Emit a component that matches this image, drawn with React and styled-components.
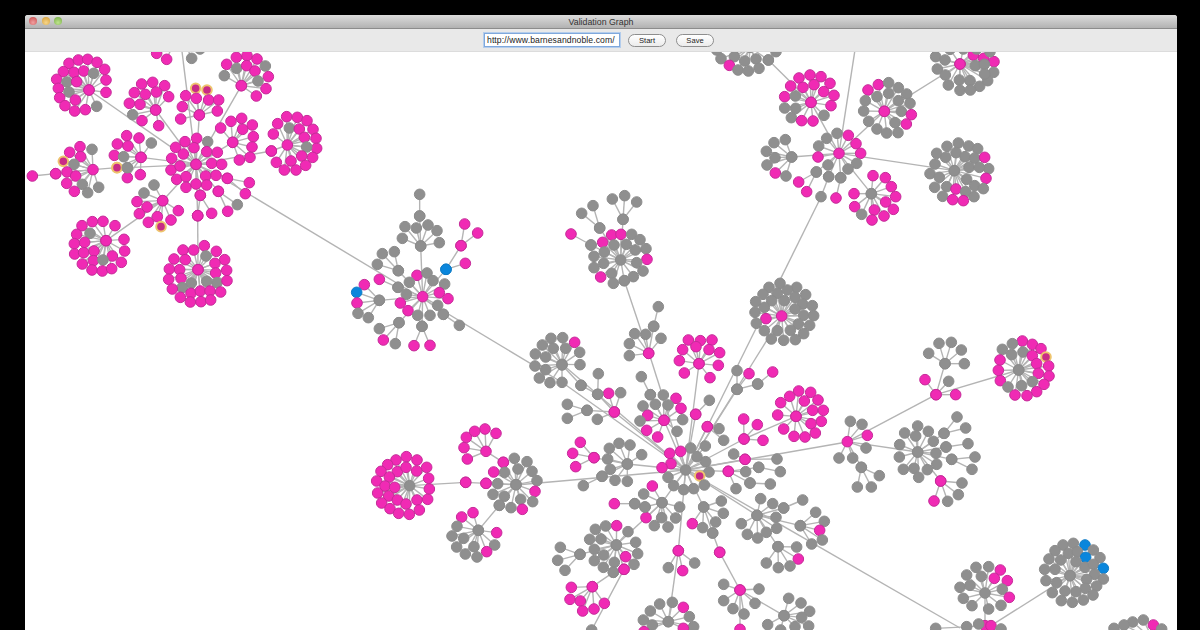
import React from 'react';
import styled, { createGlobalStyle } from 'styled-components';

// every cluster is "hub leaf leaf ..." in the coordinates of its crop, p/g/b/y = pink, gray, blue, gold
const crops = [
  { ox: 20, oy: 50, clusters: [
    '528,343p 495,275p 530,265p 563,275g 467,292p 522,293p 490,312p 560,305p 592,307p 455,325p 575,340p 605,343p 453,360p 480,348p 557,378p 588,376p 470,388p 498,380p 498,412p 528,402p 560,405p 622,385p 595,424p 541,436p 478,-60g 207,120p 407,180p 538,195p 664,107p 638,277p 754,303p 363,322p 428,452p 533,497p',
    '207,120p 147,40p 175,30p 203,28p 231,37p 254,58p 258,90p 258,127p 130,65p 162,67p 191,63p 221,70g 110,88p 141,96g 170,95p 115,115p 147,126g 119,143p 166,150p 135,167p 164,183p 196,179p 230,169g',
    '407,180p 365,102p 398,97p 434,107p 343,128p 376,133p 409,126p 446,140p 328,160p 360,163p 338,194g 366,212p 416,227p',
    '538,195p 527,115y 561,120y 497,137p 529,145p 566,150p 596,150p 487,170p 592,183p 482,207p',
    '664,107p 649,22p 681,17p 711,27p 620,43p 650,55g 680,47p 705,63p 736,48g 613,77g 745,80p 714,93g 738,116p 709,138p',
    '638,277p 602,234p 633,214p 665,205p 668,238p 697,225p 700,260p 696,291p 690,322p 658,330p',
    '802,285p 800,200p 832,202p 861,212p 760,252p 773,221p 808,234g 838,237p 879,238p 853,262p 888,265p 890,295p 860,291g 754,303p 845,318p 878,322p 769,337p 813,333p 857,346p 793,360p 828,360p',
    '363,322p 320,257p 357,264p 394,279g 292,282p 324,288p 283,316p 311,320g 322,353g 291,353y 322,383p 361,374p',
    '219,359p 180,290p 216,298g 149,307p 182,320p 130,334y 162,343g 107,371p 141,366p 167,378p 140,400p 187,403g 236,412g 163,424p 203,428g 291,353y',
    '107,371p 37,378p',
    '322,353g 528,343p',
    '428,452p 402,405g 372,429g 351,455p 381,471p 358,491p 475,482p 412,500p 385,517p 453,510p 423,530y 258,572p',
    '258,572p 186,527p 217,515p 249,514p 285,527p 170,553p 210,550g 312,568p 163,581p 194,577p 164,612p 191,608p 222,603p 314,603p 277,618p 304,637p 187,642p 220,632p 249,630g 216,660p 247,663p 275,656p',
    '533,497p 534,659p',
    '534,659p 489,600p 521,600p 553,587p 589,604p 558,618g 462,627p 496,629p 614,629p 585,640p 448,657p 479,659p 620,661p 587,669p 446,688p 483,685p 514,699g 560,694g 591,698g 621,692p 487,713g 457,717p 602,726p 513,730p 541,723p 570,723p 481,742p 511,756p 543,755p 572,750p',
    '541,436p 575,490p 533,497p',
    '595,424p 623,484p 652,464g',
    '622,385p 676,431p 688,398p',
    '478,-60g 410,10p 440,28p 515,25g 540,-3g',
  ] },
  { ox: 340, oy: 180, clusters: [
    '248,350p 231,286p 261,279g 208,307g 279,302g 314,312g 174,322g 199,343g 298,338p 324,356p 181,369p 204,392p 293,376g 233,406g 270,406g 310,403g 118,361g 175,272g 242,198g 318,268b 177,428g 246,439g',
    '310,403g 358,436g',
    '118,361g 73,314p 50,337b 51,369p 54,400g 85,413g',
    '175,272g 127,221g 163,215g 112,253g',
    '174,322g 118,298p',
    '242,198g 195,140g 229,144g 264,135g 291,152g 187,175g 298,188g 239,108g',
    '239,108g 239,43g',
    '318,268b 363,197p 376,250p',
    '363,197p 374,132p 413,159p',
    '177,428g 118,446g 130,480p 166,491g',
    '246,439g 222,497p 270,496p',
    '842,240g 815,165p 843,163p 788,187p 875,163g 900,179g 918,206g 753,195g 822,195g 859,193g 886,210g 793,216g 762,229g 921,238p 791,250g 890,248g 762,263g 909,273g 815,280g 782,291p 880,290g 853,302g 820,310g 779,144g 849,118g',
    '753,195g 693,162p',
    '779,144g 725,100g 759,77g',
    '849,118g 817,57g 854,47g 890,66g',
    '853,302g 926,520p',
    '926,520p 941,439g 884,461g 917,463g 868,491g 868,527g 963,475g',
    '941,439g 955,380g',
    '666,553g 633,475g 668,473g 607,495g 640,505g 677,505g 704,487p 586,522g 617,531g 719,517g 585,558g 617,569g 720,554g 598,594g 630,608g 666,607g',
  ] },
  { ox: 700, oy: 50, clusters: [
    '417,310p 411,250g 445,256p 380,265g 468,281p 356,288g 482,310p 354,321p 470,340g 384,345g 444,357g 349,366g 386,380g 422,383g 468,-20g 333,157p 553,184p 275,321g 514,431g 763,362g',
    '349,366g 296,396p 320,425p',
    '386,380g 363,440g',
    '422,383g 408,444p',
    '333,157p 297,84p 330,75p 363,80p 272,108p 342,104p 390,100p 309,112p 371,125p 402,136p 254,140p 286,138g 393,167p 254,174g 287,175g 372,196g 274,203g 305,212p 339,213p 205,30g',
    '150,-8g 205,30g 168,27g 134,33g 63,26g 103,20g 88,46p 114,60g 145,63g 177,55g 50,0g 228,5g',
    '553,184p 504,120p 535,104p 566,98g 595,113g 620,132g 531,140g 566,130g 595,152g 496,152g 630,160g 491,183g 604,184g 634,194p 506,214g 585,218g 619,222p 531,237g 560,249g 594,248g 780,42p',
    '780,42p 820,15p 851,25p 882,35p 707,20g 735,30g 712,57g 736,75g 826,47g 853,43g 881,67g 745,105g 778,90g 810,92g 839,109g 780,121g 811,120g 863,92g 854,72g 750,-2g 790,-3g 830,-3g 870,5g',
    '275,321g 222,278g 256,269g 199,304g 225,323g 201,345g 226,369p 258,378g',
    '514,431g 519,377p 556,383p 574,410p 587,440p 462,431p 557,456p 580,478p 464,470p 523,480p 552,498p 485,493g 516,510p',
    '763,362g 741,289g 775,279g 806,288g 833,296g 710,310g 737,322g 768,308g 795,320g 824,325g 854,322p 705,342g 866,356g 690,371g 718,382g 807,352g 838,352g 800,388g 858,385p 704,412g 740,410g 768,417p 824,407g 850,416g 797,425g 728,439g 758,449p 790,452p 822,440g',
    '245,798p 240,700g 207,712g 290,712g 189,733g 232,730g 262,720g 317,734g 167,755g 215,752g 253,752g 285,742g 308,762g 337,767g 193,772g 285,777g 165,787g 311,796g 341,797g 198,806p 169,820g 295,822g 329,826g 193,842g 232,842g 271,841g 311,851g 214,867g 251,871g 286,869g',
  ] },
  { ox: 530, oy: 340, clusters: [
    '467,390g 482,324g 452,334p 419,340p 526,318g 501,350g 527,365g 423,371p 396,383p 537,396g 509,408y 414,412g 431,437g 461,449g 491,446g 523,435g 497,223p 532,260p 621,148g 642,297p 645,358p 595,394p 507,71p 402,241p 253,216p 292,372g 396,488g 445,632p 521,501g 681,526g',
    '497,223p 538,181g',
    '532,260p 567,266g 581,301g',
    '621,148g 621,92g 683,132g',
    '683,132g 728,96p',
    '621,148g 657,101p',
    '642,297p 641,237p 682,254p 699,301p 798,229p',
    '645,358p 741,357g 611,342g',
    '595,394p 686,382g 647,395g 660,429g 618,446g',
    '686,382g 751,395g',
    '660,429g 721,432g',
    '798,229p 806,153p 842,157p 779,169p 864,180p 752,188p 823,183p 848,211p 880,211p 743,225p 874,244p 843,251p 856,279p 761,267p 792,289p 825,291p',
    '507,71p 475,0p 511,2p 546,0p 458,29p 498,20p 537,29p 569,38p 448,62p 565,76p 463,99p 540,113p',
    '402,241p 361,164g 400,165g 438,175p 339,198g 376,193g 414,195g 453,205p 353,226p 458,239g 330,243g 350,271p 441,274g 383,291p',
    '361,164g 334,110g',
    '253,216p 236,160p 203,163g 272,158g 171,211g 202,238g',
    '203,163g 205,101g 153,136g',
    '153,136g 96,75g',
    '171,211g 112,193g 112,235g',
    '292,372g 267,310g 300,315g 238,325g 335,344g 233,357g 241,388g 216,409g 255,421g 292,424g 192,353p',
    '216,409g 160,437g',
    '192,353p 151,307p 128,340p 137,380p',
    '396,488g 341,462g 367,438p 345,501g 449,501g 348,533p 395,533g 437,534g 373,557g 414,561g 259,615g',
    '345,501g 314,491g',
    '314,491g 253,491p',
    '259,615g 196,568g 227,558g 260,557p 294,575g 179,598g 213,597g 317,607g 193,628g 323,641g 221,645g 287,650p 193,662g 253,667g 312,673g 220,682g 282,688p 250,697g 150,643g',
    '150,643g 91,622g 83,661g 105,691g',
    '250,697g 187,740p',
    '187,740p 124,742p 120,778p 151,783p 158,813p 192,807p 223,790p',
    '282,688p 185,870g',
    '445,632p 415,683g 458,692p 494,669g 415,845g',
    '415,845g 427,787g 389,792g 460,802p 361,813g 478,830g 340,840g 367,855g 491,860g 460,865p 342,875p',
    '521,501g 574,483g 580,520g 487,551p 557,546g 518,563g 548,579g',
    '548,579g 569,637p',
    '569,637p 630,750p',
    '630,750p 581,733g 687,747g 581,782g 609,806g 675,790g 642,822g 762,827g 630,868p',
    '762,827g 776,775g 813,789g 839,814g 815,832g 713,854g 836,858g 795,860g 752,870g',
    '681,526g 692,476g 728,491g 761,504g 634,551g 738,532g 740,565g 652,583g 683,594g 709,577g 811,557g 744,620g',
    '761,504g 818,480g',
    '811,557g 857,517g 883,544g 869,571p 845,612g 877,600g',
    '744,620g 800,621g 805,657p 709,669g 745,683g 780,678g',
  ] },
  { ox: 360, oy: 410, clusters: [
    '149,227g 139,140p 108,150p 171,150p 83,164p 200,172p 63,184p 112,185p 138,172p 170,183p 88,201p 206,205p 50,213p 75,228p 104,232p 208,237p 53,249p 86,258p 203,268p 65,279p 112,270p 138,282p 171,270p 178,300p 90,296p 116,310p 148,313p 317,217p',
    '317,217p 378,220p',
    '378,220p 468,224g',
    '378,124p 375,57p 344,64p 408,70p 319,82p 312,113p 322,147p 430,157p',
    '468,224g 463,145g 501,155g 430,157p 474,177g 434,187g 516,184g 401,186p 531,212g 413,221g 525,244p 399,253g 433,259g 518,275g 482,268g 418,286g 453,293g 487,298p',
    '418,286g 355,361g',
    '355,361g 305,321p 339,308p 291,349g 276,378g 311,385g 410,368p 404,405g 290,411g 342,410g 380,425p 316,432g 351,441g',
  ] },
  { ox: 840, oy: 330, clusters: [
    '22,335p 31,274g 66,283g 82,316p 78,354g 38,384g -3,384g 64,412g 288,194p 233,366g',
    '64,412g 118,437g 52,471g 94,471g',
    '288,194p 255,149p 326,154g 347,194p 315,101g 536,120g',
    '315,101g 297,40g 334,37g 266,70g 364,60g 373,101g',
    '536,120g 547,33p 517,41g 577,43p 487,58g 603,56p 515,74g 549,66g 577,77p 618,81y 480,90p 590,101p 626,108p 475,121p 595,130p 627,138p 481,152p 577,155g 612,163p 504,171g 545,167g 590,185p 525,195p 561,197p',
    '233,366g 233,288g 194,309g 265,304g 227,318g 280,334g 179,344g 318,351g 288,370g 178,381g 335,388g 290,403g 222,415g 190,418g 262,419g 236,442g 312,310g 302,453p',
    '318,351g 384,341g',
    '335,388g 405,381g 396,418g',
    '312,310g 351,261g 377,294g',
    '302,453p 366,459g 355,494g 323,514g 282,513p',
    '435,789g 408,712g 446,710g 481,720p 380,735g 424,739g 463,745p 502,752p 360,772g 390,766g 487,778g 370,805g 508,802p 396,827g 446,837g 483,826g 435,887p',
    '453,887p 380,890g 416,882g 287,895g 483,897g 690,737g',
    '690,737g 700,640g 669,645g 735,645b 645,662g 685,670g 712,665g 760,660g 627,687g 662,690g 737,682b 708,695g 780,683g 614,718g 645,718g 735,712g 760,703g 790,715b 764,733g 740,748g 790,747g 618,752g 650,758g 736,775g 770,768g 637,788g 675,783g 708,785g 759,795g 664,812g 697,817g 730,810g',
    '940,930g 940,885p 910,870g 878,876g 852,885g 822,895g 965,897g',
  ] },
];

// long edges that run from one crop to the next, in page coordinates
const bridges = [
  [227, 181, 563, 383],
  [563, 383, 686, 470],
  [562, 364, 686, 470],
  [649, 353, 686, 470],
  [821, 197, 686, 470],
  [782, 316, 686, 470],
  [516, 485, 686, 470],
  [847, 442, 686, 470],
  [703, 480, 960, 628],
];

const parseNode = (token, ox, oy) => {
  const [, x, y, kind] = token.match(/(-?\d+),(-?\d+)([pgby])/);
  return { x: ox + x / 3, y: oy + y / 3, kind };
};

const edges = bridges.map(([x1, y1, x2, y2]) => ({ x1, y1, x2, y2 }));
const nodes = [];

crops.forEach(({ ox, oy, clusters }) => {
  clusters.forEach((cluster) => {
    const [hub, ...leaves] = cluster.split(' ').map((t) => parseNode(t, ox, oy));
    nodes.push(hub, ...leaves);
    leaves.forEach((leaf) => edges.push({ x1: hub.x, y1: hub.y, x2: leaf.x, y2: leaf.y }));
  });
});

const nodeFill = { p: '#f02ab4', g: '#8f8f8f', b: '#0a86dc', y: '#c92a86' };
const nodeStroke = { p: '#c42c98', g: '#8c8c8c', b: '#0f7cc6', y: '#eec46e' };

const GlobalStyle = createGlobalStyle`
  html, body {
    margin: 0;
    background: #000;
  }
`;

const Page = styled.div`
  box-sizing: border-box;
  width: 1200px;
  height: 630px;
  padding: 15px 23px 0 25px;
  overflow: hidden;
  font-family: "Liberation Sans", Arial, sans-serif;
`;

const Window = styled.div`
  display: flex;
  flex-direction: column;
  height: 100%;
  background: #fff;
  border-radius: 3px 3px 0 0;
`;

const TitleBar = styled.div`
  position: relative;
  box-sizing: border-box;
  display: flex;
  align-items: center;
  justify-content: center;
  height: 14px;
  background: linear-gradient(#dcdcdc, #b2b2b2);
  border-bottom: 1px solid #8c8c8c;
  border-radius: 3px 3px 0 0;
`;

const Lights = styled.div`
  position: absolute;
  left: 4px;
  top: 2px;
  display: flex;
  gap: 4.5px;
`;

const Light = styled.span`
  width: 8px;
  height: 8px;
  border-radius: 50%;
  background: radial-gradient(circle at 50% 70%, ${(p) => p.$glow}, ${(p) => p.$color});
`;

const Title = styled.span`
  font-size: 8.8px;
  color: #333;
`;

const Toolbar = styled.div`
  box-sizing: border-box;
  display: flex;
  align-items: center;
  justify-content: center;
  gap: 10px;
  height: 23px;
  background: #e9e9e9;
  border-bottom: 1px solid #dcdcdc;
  padding-right: 4px;
`;

const UrlField = styled.input`
  box-sizing: border-box;
  width: 136px;
  height: 14px;
  padding: 0 2px;
  border: 1px solid #7fa8dc;
  outline: 1px solid #b4cdec;
  background: #fff;
  font: 8.6px "Liberation Sans", Arial, sans-serif;
  color: #222;
  letter-spacing: 0.1px;
  margin-right: -2px;
`;

const PillButton = styled.button`
  box-sizing: border-box;
  width: 38px;
  height: 13px;
  padding: 0;
  border: 1px solid #8e8e8e;
  border-radius: 7px;
  background: linear-gradient(#fff, #ececec);
  font: 7.6px "Liberation Sans", Arial, sans-serif;
  color: #222;
`;

const Graph = styled.svg`
  display: block;
  flex: 1;
  min-height: 0;
  width: 100%;
  filter: blur(0.3px);
`;

const Edge = styled.line`
  stroke: #b4b4b4;
  stroke-width: 1.4;
`;

const Node = styled.circle`
  fill: ${(p) => nodeFill[p.$kind]};
  stroke: ${(p) => nodeStroke[p.$kind]};
  stroke-width: ${(p) => (p.$kind === 'y' ? 2 : 1)};
`;

function ValidationGraph() {
  return (
    <Graph viewBox="25 52 1152 578" preserveAspectRatio="xMinYMin slice">
      {edges.map((e, i) => (
        <Edge key={i} x1={e.x1} y1={e.y1} x2={e.x2} y2={e.y2} />
      ))}
      {nodes.map((n, i) => (
        <Node key={i} cx={n.x} cy={n.y} r={n.kind === 'y' ? 4.8 : 5.3} $kind={n.kind} />
      ))}
    </Graph>
  );
}

export default function App() {
  return (
    <Page>
      <GlobalStyle />
      <Window>
        <TitleBar>
          <Lights>
            <Light $color="#c8494a" $glow="#f0a0a0" />
            <Light $color="#d49a32" $glow="#f6d68a" />
            <Light $color="#6fa83e" $glow="#bfe48e" />
          </Lights>
          <Title>Validation Graph</Title>
        </TitleBar>
        <Toolbar>
          <UrlField readOnly value="http://www.barnesandnoble.com/" />
          <PillButton>Start</PillButton>
          <PillButton>Save</PillButton>
        </Toolbar>
        <ValidationGraph />
      </Window>
    </Page>
  );
}
